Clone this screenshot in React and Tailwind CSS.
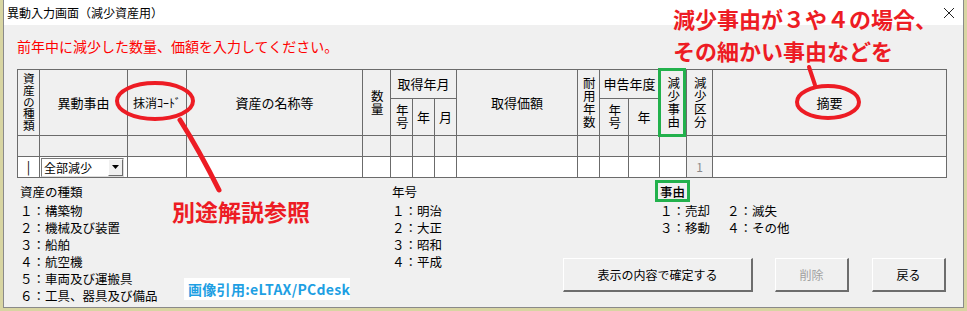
// 異動入力画面（減少資産用） — 注釈付きスクリーンショット
const cell = 'border border-[#6b6b6b] p-0 font-normal align-middle text-center'

// 縦書きの見出し
function V({ t, cls }) {
  return (
    <span className={`inline-block align-middle [writing-mode:vertical-rl] [text-orientation:upright] leading-none ${cls}`}>
      {t}
    </span>
  )
}

const COLS = ['w-[22px]', 'w-[88px]', 'w-[59px]', 'w-[176px]', 'w-[28px]', 'w-[22px]', 'w-[22px]', 'w-[22px]',
  'w-[121px]', 'w-[22px]', 'w-[29px]', 'w-[31px]', 'w-[27px]', 'w-[26px]', 'w-[234px]']

const SHURUI = ['１：構築物', '２：機械及び装置', '３：船舶', '４：航空機', '５：車両及び運搬具', '６：工具、器具及び備品']
const NENGO = ['１：明治', '２：大正', '３：昭和', '４：平成']

function Button({ children, w, disabled }) {
  return (
    <button className={`${w} h-[34px] bg-[#f0f0f0] border-t border-l border-white border-r-2 border-b-2 border-r-[#6d6d6d] border-b-[#6d6d6d] text-[12px] ${disabled ? 'text-[#a0a0a0]' : 'text-black'}`}>
      {children}
    </button>
  )
}

export default function App() {
  return (
    <div className="relative w-[967px] h-[311px] overflow-hidden bg-[#d8d5a2] font-['Noto_Sans_CJK_JP',sans-serif] text-black">
      <div className="ml-[3px] w-[961px] h-[308px] bg-[#f0f0f0] border-l border-r border-b border-[#8a8a8a] flex flex-col">

        {/* タイトルバー */}
        <div className="h-[25px] bg-white flex items-center justify-between pl-[3px] pr-[8px]">
          <span className="text-[12px]">異動入力画面（減少資産用）</span>
          <svg width="12" height="12" viewBox="0 0 12 12">
            <path d="M1 1 L11 11 M11 1 L1 11" stroke="#222" strokeWidth="1" fill="none" />
          </svg>
        </div>

        <div className="pl-[13px] pt-[11px] flex flex-col">
          <p className="text-[14px] leading-[20px] text-[#ff0000]">前年中に減少した数量、価額を入力してください。</p>

          <table className="mt-[13px] table-fixed border-collapse w-[930px] text-[13px]">
            <colgroup>
              {COLS.map((w, i) => <col key={i} className={w} />)}
            </colgroup>
            <tbody>
              <tr className="h-[29px]">
                <th rowSpan={2} className={cell}><V t="資産の種類" cls="text-[11.7px]" /></th>
                <th rowSpan={2} className={cell}>異動事由</th>
                <th rowSpan={2} className={`${cell} text-[12px]`}>抹消ｺｰﾄﾞ</th>
                <th rowSpan={2} className={cell}>資産の名称等</th>
                <th rowSpan={2} className={cell}><V t="数量" cls="text-[12.5px]" /></th>
                <th colSpan={3} className={cell}>取得年月</th>
                <th rowSpan={2} className={cell}>取得価額</th>
                <th rowSpan={2} className={cell}><V t="耐用年数" cls="text-[12.5px] tracking-[0.4px]" /></th>
                <th colSpan={2} className={cell}>申告年度</th>
                <th rowSpan={2} className={cell}><V t="減少事由" cls="text-[12.5px] tracking-[0.4px]" /></th>
                <th rowSpan={2} className={cell}><V t="減少区分" cls="text-[12.5px] tracking-[0.4px]" /></th>
                <th rowSpan={2} className={cell}>摘要</th>
              </tr>
              <tr className="h-[37px]">
                <th className={cell}><V t="年号" cls="text-[12.5px] tracking-[0.4px]" /></th>
                <th className={cell}>年</th>
                <th className={cell}>月</th>
                <th className={cell}><V t="年号" cls="text-[12.5px] tracking-[0.4px]" /></th>
                <th className={cell}>年</th>
              </tr>
              <tr className="h-[21px]">
                {COLS.map((_, i) => <td key={i} className={cell} />)}
              </tr>
              <tr className="h-[21px] bg-white">
                <td className={cell}>|</td>
                <td className={`${cell} text-left`}>
                  <div className="ml-[1px] w-[83px] h-[19px] flex items-center bg-white border border-t-[#7a7a7a] border-l-[#7a7a7a] border-r-[#dcdcdc] border-b-[#dcdcdc]">
                    <span className="flex-1 pl-[2px] text-[12px] leading-[17px]">全部減少</span>
                    <span className="w-[15px] h-[17px] flex items-center justify-center bg-[#f0f0f0] border-t border-l border-white border-r border-b border-r-[#6d6d6d] border-b-[#6d6d6d]">
                      <svg width="7" height="4" viewBox="0 0 7 4"><path d="M0 0 L7 0 L3.5 4 Z" fill="#000" /></svg>
                    </span>
                  </div>
                </td>
                {COLS.slice(2, 13).map((_, i) => <td key={i} className={cell} />)}
                <td className={`${cell} bg-[#f0f0f0] text-[#8a8a8a] text-[12px]`}>1</td>
                <td className={cell} />
              </tr>
            </tbody>
          </table>

          {/* 凡例とボタン */}
          <div className="ml-[3px] mt-[5px] flex text-[12.5px]">
            <div className="w-[372px]">
              <div className="h-[18px] leading-[18px]">資産の種類</div>
              <div className="mt-[1px] leading-[17.1px]">
                {SHURUI.map(s => <div key={s}>{s}</div>)}
              </div>
            </div>
            <div className="w-[171px]">
              <div className="h-[18px] leading-[18px]">年号</div>
              <div className="mt-[1px] leading-[17.1px]">
                {NENGO.map(s => <div key={s}>{s}</div>)}
              </div>
            </div>
            <div className="w-[383px] flex flex-col">
              <div className="ml-[97px] h-[18px] leading-[18px] font-medium">事由</div>
              <div className="ml-[97px] mt-[1px] leading-[17.1px]">
                <div className="flex"><span className="w-[67px]">１：売却</span><span>２：滅失</span></div>
                <div className="flex"><span className="w-[67px]">３：移動</span><span>４：その他</span></div>
              </div>
              <div className="mt-[22px] flex">
                <Button w="w-[190px]">表示の内容で確定する</Button>
                <div className="ml-[22px]"><Button w="w-[74px]" disabled>削除</Button></div>
                <div className="ml-[23px]"><Button w="w-[74px]">戻る</Button></div>
              </div>
            </div>
          </div>
        </div>
      </div>

      {/* 注釈 */}
      <div className="absolute left-[673px] top-[2px] text-[22px] leading-[32px] font-bold text-[#ed1c24] whitespace-nowrap">
        <div>減少事由が３や４の場合、</div>
        <div>その細かい事由などを</div>
      </div>
      <div className="absolute left-[172px] top-[196px] text-[23px] leading-[30px] font-bold text-[#ed1c24] whitespace-nowrap">
        別途解説参照
      </div>
      <div className="absolute left-[184px] top-[278px] w-[166px] h-[22px] bg-white flex items-center pl-[4px] text-[14px] font-bold text-[#1e9fe3] whitespace-nowrap tracking-[0.3px]">
        画像引用:eLTAX/PCdesk
      </div>

      <svg className="absolute left-0 top-0 pointer-events-none" width="967" height="311" viewBox="0 0 967 311">
        <ellipse cx="155" cy="101" rx="38" ry="18" fill="none" stroke="#ed1c24" strokeWidth="4" />
        <path d="M180 120 Q199 150 219 190" fill="none" stroke="#ed1c24" strokeWidth="5" strokeLinecap="round" />
        <ellipse cx="828" cy="102" rx="31" ry="16" fill="none" stroke="#ed1c24" strokeWidth="4" />
        <path d="M809 67 L815 85" fill="none" stroke="#ed1c24" strokeWidth="4" strokeLinecap="round" />
        <rect x="659.5" y="69.5" width="25" height="66" fill="none" stroke="#22b14c" strokeWidth="3" />
        <rect x="656.5" y="181.5" width="32" height="19" fill="none" stroke="#22b14c" strokeWidth="3" />
      </svg>
    </div>
  )
}
